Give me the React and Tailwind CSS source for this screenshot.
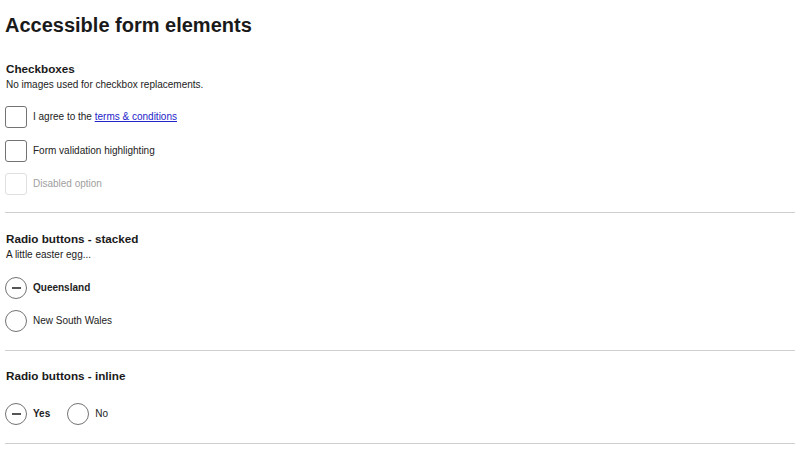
import { useState } from "react";

function Checkbox({ label, disabled, checked, onChange }) {
  return (
    <label className={`flex items-center gap-[6px] h-[22px] ${disabled ? "text-[#a0a0a0]" : "text-[#222] cursor-pointer"}`}>
      <input type="checkbox" className="sr-only" disabled={disabled} checked={checked} onChange={onChange} />
      <span
        className={`w-[22px] h-[22px] shrink-0 rounded-[3px] border-[1.5px] flex items-center justify-center ${disabled ? "border-[#e0e0e0]" : "border-[#737373]"}`}
      >
        {checked && <span className="text-[13px] leading-none text-[#333]">✓</span>}
      </span>
      <span className="text-[10px] leading-[12px]">{label}</span>
    </label>
  );
}

function Radio({ label, checked, onChange, name }) {
  return (
    <label className="flex items-center gap-[6px] h-[22px] text-[#222] cursor-pointer">
      <input type="radio" name={name} className="sr-only" checked={checked} onChange={onChange} />
      <span className="w-[22px] h-[22px] shrink-0 rounded-full border-[1.5px] border-[#737373] flex items-center justify-center">
        {checked && <span className="w-[9px] h-[1.5px] bg-[#555]" />}
      </span>
      <span className={`text-[10px] leading-[12px] ${checked ? "font-bold" : ""}`}>{label}</span>
    </label>
  );
}

export default function App() {
  const [agree, setAgree] = useState(false);
  const [highlight, setHighlight] = useState(false);
  const [state, setState] = useState("qld");
  const [yesNo, setYesNo] = useState("yes");

  return (
    <div className="min-h-screen bg-white px-[5px] text-[#222]" style={{ fontFamily: '"Liberation Sans", Arial, sans-serif' }}>
      <h1 className="pt-[14px] text-[20px] leading-[23px] font-bold text-[#1a1a1a]">Accessible form elements</h1>

      {/* Checkboxes */}
      <section className="pt-[25px] pb-[17px] border-b border-[#cfcfcf]">
        <h3 className="text-[11.7px] leading-[14px] font-bold text-[#1a1a1a] pl-px">Checkboxes</h3>
        <p className="mt-[3px] text-[10px] leading-[12px] pl-px">No images used for checkbox replacements.</p>
        <div className="mt-[15px] flex flex-col gap-[11.5px]">
          <Checkbox
            checked={agree}
            onChange={() => setAgree(!agree)}
            label={
              <>
                I agree to the{" "}
                <a href="#" className="text-[#2323c8] underline">
                  terms &amp; conditions
                </a>
              </>
            }
          />
          <Checkbox checked={highlight} onChange={() => setHighlight(!highlight)} label="Form validation highlighting" />
          <Checkbox disabled label="Disabled option" />
        </div>
      </section>

      {/* Radio buttons - stacked */}
      <section className="pt-[19px] pb-[18px] border-b border-[#cfcfcf]">
        <h3 className="text-[11.7px] leading-[14px] font-bold text-[#1a1a1a] pl-px">Radio buttons - stacked</h3>
        <p className="mt-[3px] text-[10px] leading-[12px] pl-px">A little easter egg...</p>
        <div className="mt-[16px] flex flex-col gap-[11px]">
          <Radio name="state" label="Queensland" checked={state === "qld"} onChange={() => setState("qld")} />
          <Radio name="state" label="New South Wales" checked={state === "nsw"} onChange={() => setState("nsw")} />
        </div>
      </section>

      {/* Radio buttons - inline */}
      <section className="pt-[18px] pb-[18px] border-b border-[#cfcfcf]">
        <h3 className="text-[11.7px] leading-[14px] font-bold text-[#1a1a1a] pl-px">Radio buttons - inline</h3>
        <div className="mt-[20px] flex items-center gap-[17px]">
          <Radio name="yesno" label="Yes" checked={yesNo === "yes"} onChange={() => setYesNo("yes")} />
          <Radio name="yesno" label="No" checked={yesNo === "no"} onChange={() => setYesNo("no")} />
        </div>
      </section>
    </div>
  );
}
